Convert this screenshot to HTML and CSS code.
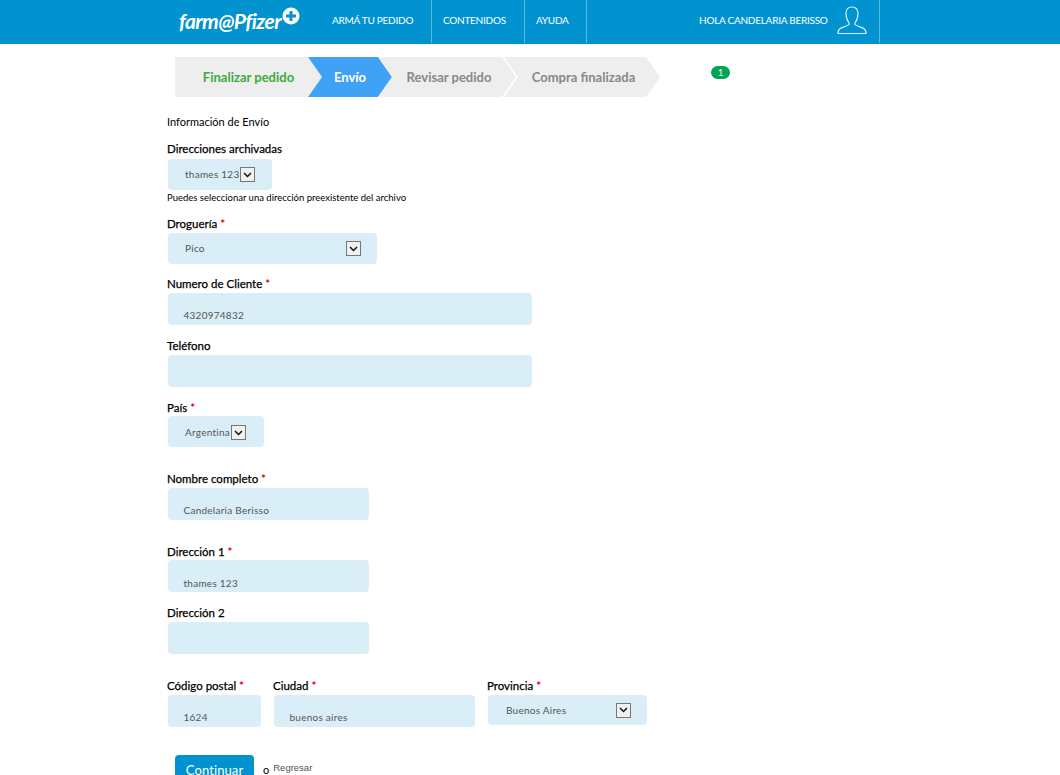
FILE: index.html
```html
<!DOCTYPE html>
<html lang="es">
<head>
<meta charset="utf-8">
<title>Información de Envío</title>
<link rel="stylesheet" href="styles.css">
</head>
<body>
<header class="topbar">
  <div class="logo"><span class="logo-text">farm@Pfizer</span>
    <svg class="logo-plus" width="18" height="18" viewBox="0 0 18 18"><circle cx="9" cy="9" r="8.5" fill="#fff"/><path d="M9 4v10M4 9h10" stroke="#0093d0" stroke-width="3"/></svg>
  </div>
  <nav class="nav">
    <a class="nav-item nav-first">ARMÁ TU PEDIDO</a>
    <a class="nav-item nav-second">CONTENIDOS</a>
    <a class="nav-item nav-third">AYUDA</a>
  </nav>
  <div class="user">
    <span>HOLA CANDELARIA BERISSO</span>
    <svg width="30" height="28" viewBox="0 0 30 28" fill="none" stroke="#d6eef9" stroke-width="1.200"><path d="M15 1c-4 0-6 2.500-6 6.500 0 4 1.500 7.500 3 9.500v1.500c-1 1.500-7 2.500-9.500 4.500-1 1-1.500 2.500-1.500 4.500h28c0-2-.5-3.500-1.500-4.500-2.500-2-8.500-3-9.500-4.500v-1.500c1.500-2 3-5.500 3-9.500 0-4-2-6.500-6-6.500z"/></svg>
  </div>
</header>
<main class="page">
  <div class="steps-row">
    <ol class="steps">
      <li class="step step-done">Finalizar pedido</li>
      <li class="step step-current">Envío</li>
      <li class="step step-review">Revisar pedido</li>
      <li class="step step-final">Compra finalizada</li>
    </ol>
    <span class="badge">1</span>
  </div>
  <form class="form">
    <p class="title">Información de Envío</p>
    <div class="field field-first">
      <div class="label">Direcciones archivadas</div>
      <div class="control control-select w-addr gap2"><span class="value">thames 123</span><span class="arrow"><svg width="9" height="6" viewBox="0 0 9 6"><path d="M1 1l3.500 3.500L8 1" fill="none" stroke="#111" stroke-width="1.500"/></svg></span></div>
      <div class="hint">Puedes seleccionar una dirección preexistente del archivo</div>
    </div>
    <div class="field field-tight">
      <div class="label">Droguería <i>*</i></div>
      <div class="control control-select w-drog split"><span class="value">Pico</span><span class="arrow"><svg width="9" height="6" viewBox="0 0 9 6"><path d="M1 1l3.500 3.500L8 1" fill="none" stroke="#111" stroke-width="1.500"/></svg></span></div>
    </div>
    <div class="field field-12">
      <div class="label">Numero de Cliente <i>*</i></div>
      <div class="control control-input w-long">4320974832</div>
    </div>
    <div class="field">
      <div class="label">Teléfono</div>
      <div class="control control-input w-long"></div>
    </div>
    <div class="field">
      <div class="label">País <i>*</i></div>
      <div class="control control-select w-pais flush"><span class="value">Argentina</span><span class="arrow"><svg width="9" height="6" viewBox="0 0 9 6"><path d="M1 1l3.500 3.500L8 1" fill="none" stroke="#111" stroke-width="1.500"/></svg></span></div>
    </div>
    <div class="field field-wide">
      <div class="label">Nombre completo <i>*</i></div>
      <div class="control control-input w-mid">Candelaria Berisso</div>
    </div>
    <div class="field field-wide">
      <div class="label">Dirección 1 <i>*</i></div>
      <div class="control control-input w-mid flush">thames 123</div>
    </div>
    <div class="field">
      <div class="label">Dirección 2</div>
      <div class="control control-input w-mid"></div>
    </div>
    <div class="field-row">
      <div class="field-col col-cp">
        <div class="label">Código postal <i>*</i></div>
        <div class="control control-input w-cp">1624</div>
      </div>
      <div class="field-col col-city">
        <div class="label">Ciudad <i>*</i></div>
        <div class="control control-input w-city">buenos aires</div>
      </div>
      <div class="field-col">
        <div class="label">Provincia <i>*</i></div>
        <div class="control control-select w-prov split"><span class="value">Buenos Aires</span><span class="arrow"><svg width="9" height="6" viewBox="0 0 9 6"><path d="M1 1l3.500 3.500L8 1" fill="none" stroke="#111" stroke-width="1.500"/></svg></span></div>
      </div>
    </div>
    <div class="actions">
      <button class="btn" type="button">Continuar</button>
      <span class="dot">o</span>
      <a class="back">Regresar</a>
    </div>
  </form>
</main>
</body>
</html>
```
FILE: styles.css
```css
* { box-sizing: border-box; }
html, body { margin: 0; height: 775px; overflow: hidden; }
body { background: #fff; color: #000; font-family: Lato, "Liberation Sans", sans-serif; }

.topbar { height: 44px; background: #0093d0; display: flex; padding-left: 179px; color: #fff; font-size: 10px; letter-spacing: -.25px; }
.logo { width: 153px; display: flex; align-items: flex-start; }
.logo-text { font-size: 21px; font-style: italic; font-weight: 700; line-height: 42px; width: 103px; white-space: nowrap; letter-spacing: -.6px; }
.logo-plus { margin-top: 7px; }
.nav { display: flex; }
.nav-item { height: 43px; line-height: 41px; border-right: 1px solid #5db8e0; white-space: nowrap; padding-left: 11px; }
.nav-first { width: 100px; padding-left: 0; }
.nav-second { width: 93px; }
.nav-third { width: 62px; }
.user { margin-left: 112px; width: 181px; height: 43px; border-right: 1px solid #5db8e0; display: flex; gap: 9px; align-items: flex-start; line-height: 41px; white-space: nowrap; }
.user svg { margin-top: 6px; }

.page { padding-left: 167px; }
.steps-row { display: flex; align-items: flex-start; padding: 13px 0 0 8px; height: 53px; }
.steps { display: flex; list-style: none; margin: 0; padding: 0; font-size: 13px; font-weight: 700; }
.step { height: 40px; line-height: 41px; background: #eee; color: #888; margin-left: -14px; text-align: center; white-space: nowrap; clip-path: polygon(0 0, calc(100% - 14px) 0, 100% 50%, calc(100% - 14px) 100%, 0 100%, 14px 50%); }
.step-done { width: 147px; margin-left: 0; color: #3eaa3e; clip-path: polygon(0 0, calc(100% - 14px) 0, 100% 50%, calc(100% - 14px) 100%, 0 100%); }
.step-current { width: 84px; background: #3fa2f5; color: #fff; }
.step-review { width: 138px; padding-left: 4px; }
.step-final { width: 156px; margin-left: -12px; padding-left: 3px; }
.badge { width: 19px; height: 13px; margin: 9px 0 0 51px; border-radius: 7px; background: #00a651; color: #fff; font-size: 9px; line-height: 13px; text-align: center; }

.form { margin: 0; padding-top: 17px; }
.title { margin: 0; font-size: 11px; line-height: 16px; }
.field { margin-top: 13px; }
.field-first { margin-top: 11px; }
.field-tight { margin-top: 11px; }
.field-12 { margin-top: 12px; }
.field-wide { margin-top: 24px; }
.label { height: 16px; line-height: 16px; font-size: 11.500px; -webkit-text-stroke: .25px #000; white-space: nowrap; }
.label i { color: #e00; font-style: normal; font-weight: 700; -webkit-text-stroke: 0; }
.control { margin: 1px 0 0 1px; background: #d9eef7; border-radius: 4px; font-size: 10px; color: #555; letter-spacing: .25px; }
.gap2 { margin-top: 2px; }
.flush { margin-top: 0; }
.control-select { height: 31px; display: flex; align-items: center; padding: 0 16px 2px 17px; }
.control-input { height: 32px; padding: 14px 15px 0 15.500px; line-height: 16px; }
.control-input.flush { padding-top: 15px; }
.split { justify-content: space-between; }
.arrow { width: 15px; height: 15px; margin: 2px 0 0 1px; border: 1px solid #777; background: #f0f0f0; display: flex; align-items: center; justify-content: center; flex: none; }
.hint { margin-top: 1px; height: 14px; line-height: 14px; font-size: 9.500px; white-space: nowrap; }
.w-addr { width: 104px; }
.w-drog { width: 209px; }
.w-long { width: 364px; }
.w-pais { width: 96px; padding-bottom: 0; }
.w-mid { width: 201px; }
.w-cp { width: 93px; }
.w-city { width: 201px; }
.w-prov { width: 159px; height: 30px; padding: 0 16px 0 18px; }
.w-prov .arrow { margin-top: 0; }
.field-row { display: flex; margin-top: 24px; }
.col-cp { width: 106px; }
.col-city { width: 214px; }
.actions { display: flex; align-items: flex-start; margin: 28px 0 0 8px; }
.btn { width: 79px; height: 40px; border: 0; border-radius: 4px; background: #0093d0; color: #fff; font: 13px/16px Lato, sans-serif; padding: 0 0 10px; letter-spacing: .1px; }
.dot { margin: 9px 0 0 9px; font-size: 11px; line-height: 12px; }
.back { margin: 7px 0 0 4px; font: 9.500px/12px "Liberation Sans", sans-serif; color: #555; }
```
